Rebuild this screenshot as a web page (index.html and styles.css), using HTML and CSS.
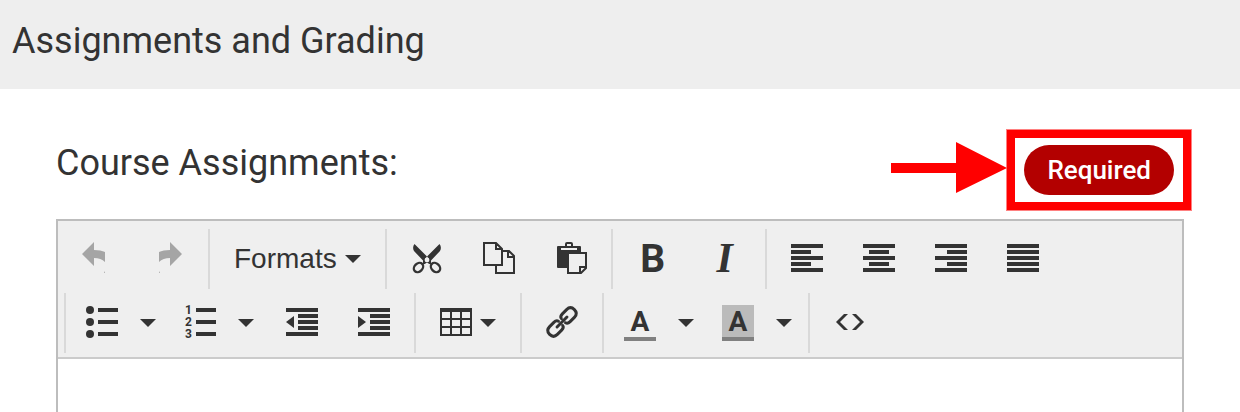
FILE: index.html
```html
<!DOCTYPE html>
<html lang="en">
<head>
<meta charset="utf-8">
<meta name="viewport" content="width=device-width, initial-scale=1">
<title>Assignments and Grading</title>
<link rel="stylesheet" href="styles.css">
</head>
<body>
<header class="section-header"><h1 class="title">Assignments and Grading</h1></header>
<main class="content">
  <div class="field-head">
    <h2 class="title"><label for="assignments">Course Assignments:</label></h2>
    <div class="badge-wrap">
      <span class="badge">Required</span>
      <span class="callout"></span>
      <svg class="arrow" viewBox="0 0 116 52" aria-hidden="true"><path d="M0 21H65V0L116 26L65 51V31H0Z"/></svg>
    </div>
  </div>
  <div class="editor">
    <div class="toolbar" role="toolbar" aria-label="Formatting">
      <div class="row">
        <div class="group">
          <button class="btn" disabled aria-label="Undo"><svg class="icon" viewBox="0 0 32 32"><path d="M2 12L14 0V8Q21 8 25 10V20Q21 16 14 16V24ZM24 31L25 29V31Z"/></svg></button>
          <button class="btn" disabled aria-label="Redo"><svg class="icon" viewBox="0 0 32 32"><path d="M30 12L18 0V8Q11 8 7 10V20Q11 16 18 16V24ZM8 31L7 29V31Z"/></svg></button>
        </div>
        <div class="group">
          <button class="btn formats">Formats<svg class="caret" viewBox="0 0 16 8"><path d="M0 0H16L8 8Z"/></svg></button>
        </div>
        <div class="group">
          <button class="btn" aria-label="Cut"><svg class="icon" viewBox="0 0 32 32"><path d="M3.500 2Q1 5 3 9L12 18.500Q14 20.500 18 17.500L16 14.500ZM28.500 2Q31 5 29 9L20 18.500Q18 20.500 14 17.500L16 14.500Z"/><path d="M12 16H20V22H12Z"/><circle class="paper" cx="16" cy="18" r="2.400"/><path class="paper" d="M14.500 21H17.500V24H14.500Z"/><g class="line rings"><ellipse cx="7.500" cy="25.500" rx="5.200" ry="4" transform="rotate(-45 7.500 25.500)"/><ellipse cx="24.500" cy="25.500" rx="5.200" ry="4" transform="rotate(45 24.500 25.500)"/></g></svg></button>
          <button class="btn" aria-label="Copy"><svg class="icon" viewBox="0 0 32 32"><path class="line" d="M1 1H13L19 7V23H1ZM13 1V7H19M20 9H26L31 14V31H13V24M25 9V15H31"/></svg></button>
          <button class="btn" aria-label="Paste"><svg class="icon" viewBox="0 0 32 32"><path d="M3 4H10V2Q10 0 12 0H16Q18 0 18 2V4H25Q26 4 26 5V26H3Q2 26 2 25V5Q2 4 3 4Z"/><path class="paper" d="M12 2H16V4H12ZM6 6H22V8H6Z"/><path class="line page" d="M13 11H31V26L26 31H13Z"/><path class="line" d="M31 25H25V31"/></svg></button>
        </div>
        <div class="group">
          <button class="btn" aria-label="Bold"><span class="letter bold">B</span></button>
          <button class="btn" aria-label="Italic"><span class="letter italic">I</span></button>
        </div>
        <div class="group">
          <button class="btn" aria-label="Align left"><svg class="icon" viewBox="0 0 32 32"><path d="M0 2H32V6H0ZM0 8H20V12H0ZM0 14H32V18H0ZM0 20H20V24H0ZM0 26H32V30H0Z"/></svg></button>
          <button class="btn" aria-label="Align center"><svg class="icon" viewBox="0 0 32 32"><path d="M0 2H32V6H0ZM6 8H26V12H6ZM0 14H32V18H0ZM6 20H26V24H6ZM0 26H32V30H0Z"/></svg></button>
          <button class="btn" aria-label="Align right"><svg class="icon" viewBox="0 0 32 32"><path d="M0 2H32V6H0ZM12 8H32V12H12ZM0 14H32V18H0ZM12 20H32V24H12ZM0 26H32V30H0Z"/></svg></button>
          <button class="btn" aria-label="Justify"><svg class="icon" viewBox="0 0 32 32"><path d="M0 2H32V6H0ZM0 8H32V12H0ZM0 14H32V18H0ZM0 20H32V24H0ZM0 26H32V30H0Z"/></svg></button>
        </div>
      </div>
      <div class="row second">
        <div class="group">
          <div class="split">
            <button class="btn" aria-label="Bullet list"><svg class="icon" viewBox="0 0 32 32"><circle cx="4" cy="4" r="4"/><circle cx="4" cy="16" r="4"/><circle cx="4" cy="28" r="4"/><path d="M12 2H32V6H12ZM12 14H32V18H12ZM12 26H32V30H12Z"/></svg></button>
            <button class="btn open" aria-label="Bullet list styles"><svg class="caret" viewBox="0 0 16 8"><path d="M0 0H16L8 8Z"/></svg></button>
          </div>
          <div class="split">
            <button class="btn" aria-label="Numbered list"><svg class="icon" viewBox="0 0 32 32"><text class="num" x="1" y="8">1</text><text class="num" x="1" y="20">2</text><text class="num" x="1" y="32">3</text><path d="M12 2H32V6H12ZM12 14H32V18H12ZM12 26H32V30H12Z"/></svg></button>
            <button class="btn open" aria-label="Numbered list styles"><svg class="caret" viewBox="0 0 16 8"><path d="M0 0H16L8 8Z"/></svg></button>
          </div>
          <button class="btn" aria-label="Decrease indent"><svg class="icon" viewBox="0 0 32 32"><path d="M0 2H32V6H0ZM12 8H32V12H12ZM12 14H32V18H12ZM12 20H32V24H12ZM0 26H32V30H0ZM8 10V22L0 16Z"/></svg></button>
          <button class="btn" aria-label="Increase indent"><svg class="icon" viewBox="0 0 32 32"><path d="M0 2H32V6H0ZM12 8H32V12H12ZM12 14H32V18H12ZM12 20H32V24H12ZM0 26H32V30H0ZM0 10V22L8 16Z"/></svg></button>
        </div>
        <div class="group">
          <button class="btn table" aria-label="Table"><svg class="icon" viewBox="0 0 32 32"><path fill-rule="evenodd" d="M0 2H32V30H0ZM2 6V12H10V6ZM12 6V12H20V6ZM22 6V12H30V6ZM2 14V20H10V14ZM12 14V20H20V14ZM22 14V20H30V14ZM2 22V28H10V22ZM12 22V28H20V22ZM22 22V28H30V22Z"/></svg><svg class="caret" viewBox="0 0 16 8"><path d="M0 0H16L8 8Z"/></svg></button>
        </div>
        <div class="group">
          <button class="btn" aria-label="Insert link"><svg class="icon" viewBox="0 0 32 32"><g class="line chain" transform="rotate(-45 16 16)"><path d="M18 13Q18.500 10.500 22 10.500H28Q33.500 10.500 33.500 16T28 21.500H22Q18.500 21.500 18 19M14 13Q13.500 10.500 10 10.500H4Q-1.500 10.500-1.500 16T4 21.500H10Q13.500 21.500 14 19M9 16H23"/></g></svg></button>
        </div>
        <div class="group">
          <div class="split">
            <button class="btn" aria-label="Text color"><span class="letter color">A</span></button>
            <button class="btn open" aria-label="Choose text color"><svg class="caret" viewBox="0 0 16 8"><path d="M0 0H16L8 8Z"/></svg></button>
          </div>
          <div class="split">
            <button class="btn" aria-label="Background color"><span class="letter color back">A</span></button>
            <button class="btn open" aria-label="Choose background color"><svg class="caret" viewBox="0 0 16 8"><path d="M0 0H16L8 8Z"/></svg></button>
          </div>
        </div>
        <div class="group">
          <button class="btn" aria-label="Source code"><svg class="icon" viewBox="0 0 32 32"><path d="M2 16L10 8H14L6 16L14 24H10ZM30 16L22 8H18L26 16L18 24H22Z"/></svg></button>
        </div>
      </div>
    </div>
    <textarea class="text" id="assignments"></textarea>
  </div>
</main>
</body>
</html>
```
FILE: styles.css
```css
* { box-sizing: border-box; }
body {
  margin: 0;
  min-height: 100vh;
  display: flex;
  flex-direction: column;
  background: #fff;
  color: #333;
  font-family: Roboto, "Liberation Sans", sans-serif;
}
.section-header { background: #eee; padding: 20px 12px 27px; }
.title { margin: 0; font-size: 36px; line-height: 42px; font-weight: 400; }
.content {
  flex: 1;
  display: flex;
  flex-direction: column;
  padding: 53px 56px 0;
}
.field-head {
  display: flex;
  justify-content: space-between;
  align-items: flex-start;
  padding-right: 10px;
  margin-bottom: 24px;
}
.badge-wrap { position: relative; margin-top: 3px; }
.badge {
  display: block;
  padding: 0 23px;
  border-radius: 25px;
  background: #b30000;
  color: #fff;
  font-size: 26px;
  line-height: 50px;
  font-weight: 500;
}
.callout {
  position: absolute;
  inset: -16px -18px;
  border: 9px solid #f00;
  outline: 1px solid #ff8080;
  outline-offset: -1px;
}
.arrow {
  position: absolute;
  right: calc(100% + 17px);
  top: -3px;
  width: 116px;
  height: 52px;
  fill: #f00;
}
.editor {
  flex: 1;
  display: flex;
  flex-direction: column;
  border: 2px solid #bdbdbd;
  border-bottom: 0;
}
.toolbar {
  display: flex;
  flex-direction: column;
  gap: 4px;
  padding: 8px 2px 4px;
  background: #efefef;
  border-bottom: 2px solid #cbcbcb;
}
.row { display: flex; flex-wrap: wrap; }
.second { padding-left: 4px; }
.group { display: flex; padding: 0 4px; border-left: 2px solid #d9d9d9; }
.row:not(.second) .group:first-child { border-left: 0; padding-left: 0; }
.btn {
  display: flex;
  align-items: center;
  height: 60px;
  padding: 0 20px;
  border: 0;
  background: none;
  color: #333;
}
.btn:disabled { color: #a5a5a5; }
.formats {
  gap: 8px;
  font: 28px/32px "Liberation Sans", Arial, sans-serif;
}
.icon { display: block; width: 32px; height: 32px; margin-bottom: 2px; fill: currentColor; overflow: visible; }
.caret { display: block; width: 16px; height: 8px; fill: currentColor; }
.line { fill: none; stroke: currentColor; stroke-width: 2; }
.rings { stroke-width: 2.4; }
.chain { stroke-width: 3; stroke-linecap: round; }
.paper, .page { fill: #efefef; }
.num { font: 700 12px/12px Roboto, sans-serif; }
.split { display: flex; }
.split .btn { padding: 0 16px; }
.split .open { padding: 0 12px 0 6px; }
.table { gap: 8px; }
.letter {
  display: block;
  width: 32px;
  height: 32px;
  margin-bottom: 2px;
  text-align: center;
  font: 700 39px/34px Roboto, sans-serif;
}
.italic { font: italic 700 42px/32px "Liberation Serif", serif; }
.color { height: 36px; margin: 0; font-size: 28px; line-height: 34px; border-bottom: 4px solid #808080; }
.back { background: #bbb; }
.text {
  flex: 1 0 48px;
  width: 100%;
  height: 48px;
  padding: 8px;
  border: 0;
  outline: 0;
  resize: none;
  font: 28px/32px Roboto, sans-serif;
}
```
